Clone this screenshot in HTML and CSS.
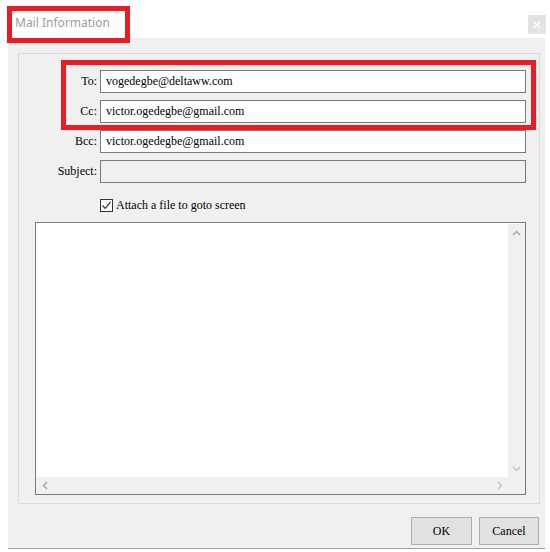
FILE: index.html
```html
<!DOCTYPE html>
<html lang="en">
<head>
  <meta charset="UTF-8" />
  <title>Mail Information</title>
  <link rel="stylesheet" href="styles.css">
</head>
<body>
  <div class="titlebar">
    <span class="title">Mail Information</span>
    <span class="close">
      <svg width="8" height="8" viewBox="0 0 8 8"><path d="M1 1L7 7M7 1L1 7" stroke="#fff" stroke-width="1.3"/></svg>
    </span>
  </div>

  <div class="dialog">
    <div class="group">
      <div class="fields">
        <label>To:</label>
        <input type="text" value="vogedegbe@deltaww.com" readonly />
        <label>Cc:</label>
        <input type="text" value="victor.ogedegbe@gmail.com" readonly />
        <label>Bcc:</label>
        <input type="text" value="victor.ogedegbe@gmail.com" readonly />
        <label>Subject:</label>
        <input type="text" class="disabled" value="" readonly />
      </div>

      <div class="attach">
        <span class="check">
          <svg width="11" height="11" viewBox="0 0 11 11"><path d="M1.5 5.5L4.2 8.3L9.5 1.8" fill="none" stroke="#333" stroke-width="1.2"/></svg>
        </span>
        <span>Attach a file to goto screen</span>
      </div>

      <div class="textbox">
        <div class="text-area"></div>
        <div class="vbar">
          <span class="arrow"><svg width="9" height="6" viewBox="0 0 9 6"><path d="M1 5L4.5 1.5L8 5" fill="none" stroke="#a6a6a6" stroke-width="1.5"/></svg></span>
          <span class="arrow"><svg width="9" height="6" viewBox="0 0 9 6"><path d="M1 1L4.5 4.5L8 1" fill="none" stroke="#c4c4c4" stroke-width="1.5"/></svg></span>
        </div>
        <div class="hbar">
          <span class="arrow"><svg width="6" height="9" viewBox="0 0 6 9"><path d="M5 1L1.5 4.5L5 8" fill="none" stroke="#a6a6a6" stroke-width="1.5"/></svg></span>
          <span class="arrow"><svg width="6" height="9" viewBox="0 0 6 9"><path d="M1 1L4.5 4.5L1 8" fill="none" stroke="#c4c4c4" stroke-width="1.5"/></svg></span>
        </div>
        <div class="corner"></div>
      </div>
    </div>

    <div class="buttons">
      <button type="button" class="ok">OK</button>
      <button type="button" class="cancel">Cancel</button>
    </div>
  </div>

  <div class="highlight title-mark"></div>
  <div class="highlight fields-mark"></div>
</body>
</html>
```

FILE: styles.css
```css
* {
  box-sizing: border-box;
}
body {
  margin: 0;
  width: 550px;
  height: 552px;
  background: #fff;
  position: relative;
  font-family: "Liberation Serif", "Times New Roman", serif;
  font-size: 12px;
  color: #000;
  overflow: hidden;
}
.titlebar {
  height: 38px;
  display: flex;
  justify-content: space-between;
  align-items: flex-start;
}
.title {
  font-family: "Noto Sans", "Open Sans", sans-serif;
  font-size: 12px;
  color: #9c9ca4;
  padding: 15px 0 0 15px;
  line-height: 16px;
}
.close {
  margin: 15px 4px 0 0;
  width: 18px;
  height: 19px;
  background: #e3e3e3;
  display: flex;
  align-items: center;
  justify-content: center;
}
.dialog {
  margin-left: 8px;
  width: 537px;
  height: 511px;
  background: #f0f0f0;
  border-bottom: 1px solid #a0a0a0;
  padding: 15px 5px 0 10px;
}
.group {
  height: 451px;
  border: 1px solid #dcdcdc;
  padding: 16px 13px 8px 0;
  display: flex;
  flex-direction: column;
}
.fields {
  display: grid;
  grid-template-columns: 78px 1fr;
  grid-auto-rows: 23px;
  column-gap: 3px;
  row-gap: 7px;
}
.fields label {
  text-align: right;
  line-height: 23px;
}
.fields input {
  height: 23px;
  border: 1px solid #7a7a7a;
  padding: 0 5px;
  font-family: inherit;
  font-size: 12px;
  color: #000;
  background: #fff;
  outline: none;
}
.fields input.disabled {
  background: #f0f0f0;
}
.attach {
  display: flex;
  align-items: center;
  gap: 3px;
  margin: 16px 0 0 81px;
  height: 13px;
  line-height: 13px;
}
.check {
  width: 13px;
  height: 13px;
  border: 1px solid #333;
  background: #fff;
  display: flex;
  align-items: center;
  justify-content: center;
}
.textbox {
  flex: 1;
  margin: 10px 0 0 16px;
  border: 1px solid #7a7a7a;
  background: #fff;
  display: grid;
  grid-template-columns: 1fr 17px;
  grid-template-rows: 1fr 17px;
}
.vbar, .hbar, .corner {
  background: #f0f0f0;
}
.vbar {
  display: flex;
  flex-direction: column;
  justify-content: space-between;
  margin-top: 1px;
}
.hbar {
  display: flex;
  justify-content: space-between;
}
.arrow {
  width: 17px;
  height: 17px;
  display: flex;
  align-items: center;
  justify-content: center;
}
.buttons {
  display: flex;
  justify-content: flex-end;
  gap: 7px;
  margin: 13px 1px 0 0;
}
.buttons button {
  height: 28px;
  background: #e1e1e1;
  border: 1px solid #adadad;
  font-family: inherit;
  font-size: 12px;
  color: #000;
  padding: 0;
}
.buttons .ok {
  width: 61px;
}
.buttons .cancel {
  width: 60px;
}
.highlight {
  position: absolute;
  border: 5px solid #ed1c24;
}
.title-mark {
  left: 7px;
  top: 6px;
  width: 123px;
  height: 37px;
}
.fields-mark {
  left: 61px;
  top: 60px;
  width: 475px;
  height: 70px;
}
```
